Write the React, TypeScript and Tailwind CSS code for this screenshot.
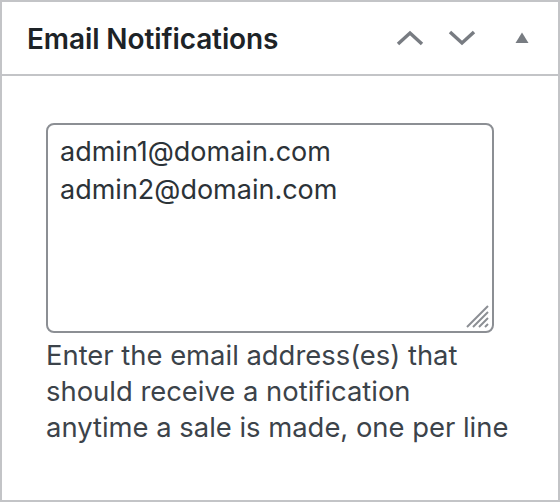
import React from "react";

const App = () => {
  return (
    <div className="w-[560px] h-[502px] bg-white border-2 border-[#c3c4c7] font-['Inter',sans-serif] box-border flex flex-col">
      {/* Header */}
      <div className="h-[74px] shrink-0 border-b-2 border-[#c3c4c7] flex items-center pl-[25px] pr-[29px]">
        <h2 className="text-[28px] font-semibold text-[#1d2327] tracking-[-0.1px] flex-1 mt-[2px]">
          Email Notifications
        </h2>
        <div className="flex items-center">
          <svg width="30" height="20" viewBox="0 0 30 20" className="mr-[22px]">
            <path d="M3 16 L15 5 L27 16" fill="none" stroke="#787c82" strokeWidth="3.5" />
          </svg>
          <svg width="30" height="20" viewBox="0 0 30 20" className="mr-[38px]">
            <path d="M3 4 L15 15 L27 4" fill="none" stroke="#787c82" strokeWidth="3.5" />
          </svg>
          <svg width="14" height="12" viewBox="0 0 14 12">
            <path d="M7 0.5 L13.5 11 L0.5 11 Z" fill="#787c82" />
          </svg>
        </div>
      </div>

      {/* Body */}
      <div className="pl-[44px] pr-[46px] pt-[47px]">
        <div className="relative w-[448px] h-[210px] border-2 border-[#8c8f94] rounded-[8px] px-[12px] pt-[8px]">
          <div className="text-[27px] leading-[38px] text-[#2c3338]">
            <div>admin1@domain.com</div>
            <div>admin2@domain.com</div>
          </div>
          <svg width="26" height="26" viewBox="0 0 26 26" className="absolute right-[2px] bottom-[2px]">
            <path
              d="M24 3 L3 24 M24 9 L9 24 M24 15 L15 24 M24 21 L21 24"
              stroke="#8c8f94"
              strokeWidth="2"
            />
          </svg>
        </div>
        <p className="mt-[4px] text-[27.4px] leading-[36px] text-[#3c434a] whitespace-nowrap">
          Enter the email address(es) that
          <br />
          should receive a notification
          <br />
          anytime a sale is made, one per line
        </p>
      </div>
    </div>
  );
};

export default App;
